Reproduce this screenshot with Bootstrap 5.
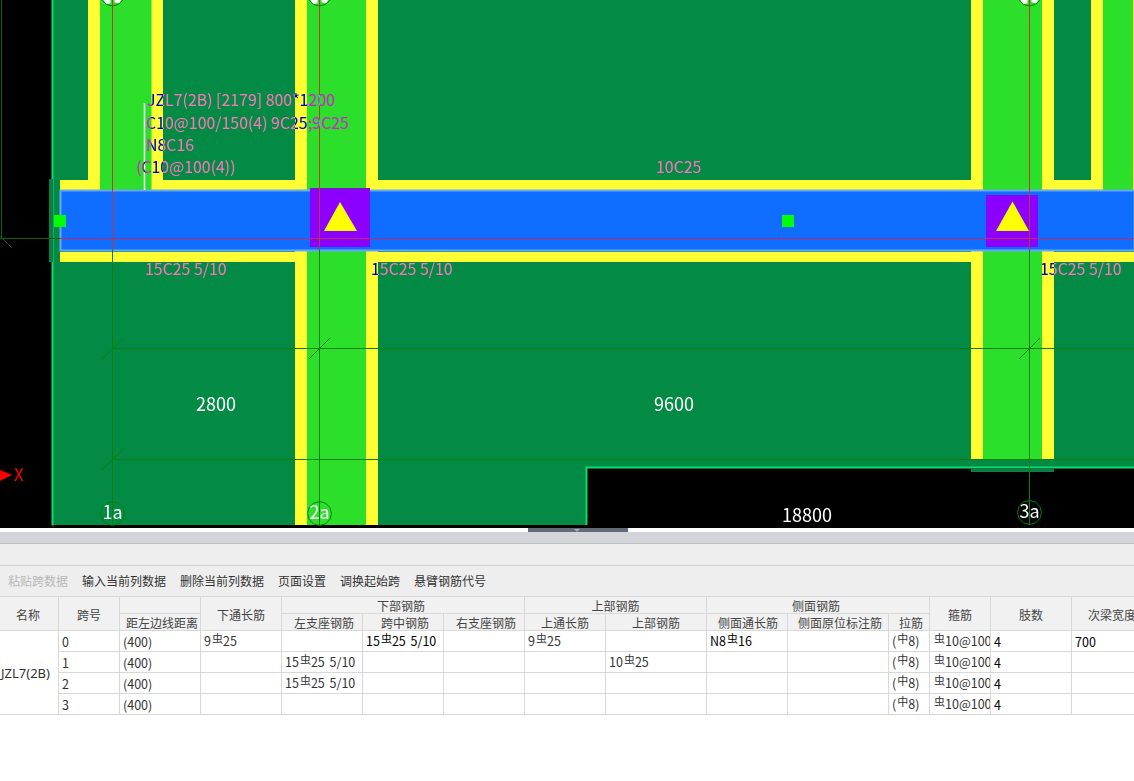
<!DOCTYPE html>
<html lang="zh"><head><meta charset="utf-8"><title>JZL7</title>
<link href="https://cdn.jsdelivr.net/npm/bootstrap@5.3.0/dist/css/bootstrap.min.css" rel="stylesheet">
<style>
html,body{height:100%;overflow:hidden}
body{background:#fff;font-family:"Noto Sans CJK SC","Noto Sans",sans-serif;font-size:12px;color:#333}
.cad-view{height:528px;background:#000;overflow:hidden;isolation:isolate}
.cad-svg{display:block;width:1134px;height:528px}
.cad-svg text{font-family:"Noto Sans CJK SC","Noto Sans",sans-serif}
.xor{fill:#fff;font-size:15.9px;mix-blend-mode:difference}
.dim{fill:#fff;font-size:18px}
.axis{fill:#fff;font-size:18px;text-anchor:middle}
.splitter{height:4px;background:#fff}
.grip{width:100px;height:4px;background:#636b78;margin-left:528px;position:relative}
.grip::after{content:"";position:absolute;left:46px;top:1px;border:3px solid transparent;border-top-color:#a9adb5;border-bottom:0}
.band-a{height:12px;background:#d3d5da;border-bottom:1px solid #bfc0c2}
.band-b{height:22px;background:#eee;border-bottom:1px solid #cfcfcf}
.tools{height:30px;background:#eee;padding-left:8px;gap:14px;color:#333}
.tools .tool{line-height:30px}
.tools .tool-off{color:#b8b8b8}
.sheet{overflow:hidden;width:1134px}
.sheet .grid-t{table-layout:fixed;width:1153px;border-collapse:separate;border-spacing:0;margin:0;border-top:1px solid #d8d8d8;font-size:12.5px;--bs-table-color:#333}
.grid-t th,.grid-t td{border:0;border-right:1px solid #d8d8d8;border-bottom:1px solid #d8d8d8;padding:0;white-space:nowrap;overflow:hidden}
.grid-t th{background:#f1f1f1;font-weight:400;font-size:12px;text-align:center;height:17px;line-height:14px;padding-top:2px;color:#444;vertical-align:middle;box-shadow:none}
.grid-t th.r2{padding-left:4px}
.grid-t th.r1{padding-left:2px}
.grid-t th.l2{padding-right:4px}
.grid-t th.l1{padding-right:2px}
.grid-t td{height:21px;line-height:16px;padding:2px 0 0 3px;vertical-align:middle;background:#fff;color:#333;box-shadow:none;word-spacing:2px}
.grid-t td.st{padding-top:0}
.grid-t td.nm{padding-left:1px;padding-top:0;font-family:"Noto Sans",sans-serif;font-size:13px}
.grid-t td.pk{color:#000}
.rb{font-size:11px;position:relative;top:-3px;margin:0 0 0 1px}
</style></head><body>
<div class="cad-view">
<svg class="cad-svg" viewBox="0 0 1134 528" xmlns="http://www.w3.org/2000/svg">
<defs><polygon id="bub" points="12,0 10.4,6 6,10.4 0,12 -6,10.4 -10.4,6 -12,0 -10.4,-6 -6,-10.4 0,-12 6,-10.4 10.4,-6" fill="none" stroke="#0a7f0a"/>
<path id="blob" d="M-9 0h7v3l-2 1h-3ZM2 0h7l-2 3h-3l-2-1Z" fill="#fff"/></defs>
<!-- slab -->
<path d="M53 0H1134V468H586V525H53Z" fill="#038a45"/>
<path d="M52.500 0V525.500M586.500 525V467.500H1134" fill="none" stroke="#0ddc72" stroke-width="2"/>
<rect x="49" y="179" width="4" height="83" fill="#0b7d45"/>
<rect x="971" y="468.500" width="83" height="3.500" fill="#0b7d45"/>
<path d="M1.500 0V238M0 236L12 248" fill="none" stroke="#0f5f0f"/>
<!-- columns -->
<g fill="#ffff33">
<rect x="88" y="0" width="75" height="190"/>
<rect x="295" y="0" width="83" height="525"/>
<rect x="971" y="0" width="83" height="459"/>
<rect x="1091" y="0" width="43" height="190"/>
<rect x="60" y="180" width="1074" height="10"/>
<rect x="60" y="252" width="1074" height="10"/>
</g>
<g fill="#2bdf2b">
<rect x="100" y="0" width="51.500" height="190"/>
<rect x="307" y="0" width="59" height="525"/>
<rect x="983" y="0" width="59" height="459"/>
<rect x="1103" y="0" width="30" height="190"/>
</g>
<!-- beam -->
<rect x="60.500" y="190.500" width="1074" height="60" fill="#0f6eff" stroke="#68a8f0" stroke-width="2"/>
<rect x="310" y="188" width="60" height="59" fill="#8b00ff"/>
<rect x="310" y="188" width="60" height="2" fill="#7a10d8"/>
<rect x="986" y="195" width="52" height="52" fill="#8b00ff"/>
<polygon points="340,202 324,231 357,231" fill="#ffff00"/>
<polygon points="1012.500,201.500 996,231 1029,231" fill="#ffff00"/>
<rect x="54" y="215" width="12" height="12" fill="#00ff00"/>
<rect x="782" y="215" width="12" height="12" fill="#00ff00"/>
<!-- bubbles top -->
<use href="#blob" x="112.500" y="0"/><use href="#blob" x="319.500" y="0"/><use href="#blob" x="1029.500" y="0"/>
<use href="#bub" x="112.500" y="-6"/><use href="#bub" x="319.500" y="-6"/><use href="#bub" x="1029.500" y="-6"/>
<!-- axes -->
<g fill="none" stroke="#0a7f0a">
<path d="M112.500 250V525M319.500 250V525M1029.500 250V501M1029.500 462V525"/>
<path d="M113 348.500H1134M113 459.500H1134"/>
<path d="M102 359L123 338M102 470L123 449M309 359L330 338M1019 359L1040 338"/>
<path d="M0 238.500H60" stroke="#0f5f0f"/>
</g>
<path d="M60 238.500H1134" fill="none" stroke="#c02a6a"/>
<path d="M112.500 0V250M319.500 0V250M1029.500 0V250" fill="none" stroke="#c0392b"/>
<path d="M144.500 103V190" fill="none" stroke="#fff" stroke-width="1.500"/>
<use href="#bub" x="112.500" y="513.500"/><use href="#bub" x="319.500" y="513.500"/><use href="#bub" x="1029.500" y="512.500"/>
<text class="axis" x="112.500" y="519">1a</text>
<text class="axis" x="319.500" y="519">2a</text>
<text class="axis" x="1029.500" y="518">3a</text>
<!-- origin -->
<polygon points="0,470 12,475 0,481" fill="#ff0000"/>
<text x="14" y="481" fill="#ff0000" font-size="17">X</text>
<!-- dims -->
<text class="dim" x="196" y="411">2800</text>
<text class="dim" x="654" y="411">9600</text>
<text class="dim" x="782" y="522">18800</text>
<!-- annotations -->
<text class="xor" x="147" y="106">JZL7(2B) [2179] 800*1200</text>
<text class="xor" x="146" y="128.500">C10@100/150(4) 9C25;9C25</text>
<text class="xor" x="146" y="150.500">N8C16</text>
<text class="xor" x="136" y="172.500">(C10@100(4))</text>
<text class="xor" x="656" y="173">10C25</text>
<text class="xor" x="145" y="274.500">15C25 5/10</text>
<text class="xor" x="371" y="274.500">15C25 5/10</text>
<text class="xor" x="1040" y="274.500">15C25 5/10</text>
</svg>
</div>
<div class="splitter"><div class="grip"></div></div>
<div class="band-a"></div>
<div class="band-b"></div>
<div class="tools d-flex">
<span class="tool tool-off">粘贴跨数据</span><span class="tool">输入当前列数据</span><span class="tool">删除当前列数据</span><span class="tool">页面设置</span><span class="tool">调换起始跨</span><span class="tool">悬臂钢筋代号</span>
</div>
<div class="sheet">
<table class="table grid-t">
<colgroup><col style="width:59px"><col style="width:61px"><col style="width:81px"><col style="width:81px"><col style="width:81px"><col style="width:81px"><col style="width:81px"><col style="width:81px"><col style="width:101px"><col style="width:81px"><col style="width:101px"><col style="width:41px"><col style="width:61px"><col style="width:81px"><col style="width:81px"></colgroup>
<thead>
<tr><th rowspan="2" class="l1">名称</th><th rowspan="2">跨号</th><th></th><th rowspan="2">下通长筋</th><th colspan="3" class="l2">下部钢筋</th><th colspan="2">上部钢筋</th><th colspan="3" class="l2">侧面钢筋</th><th rowspan="2">箍筋</th><th rowspan="2">肢数</th><th rowspan="2">次梁宽度</th></tr>
<tr><th class="r2">距左边线距离</th><th class="r2">左支座钢筋</th><th class="r2">跨中钢筋</th><th class="r2">右支座钢筋</th><th>上通长筋</th><th>上部钢筋</th><th class="r1">侧面通长筋</th><th class="r2">侧面原位标注筋</th><th class="r2">拉筋</th></tr>
</thead>
<tbody>
<tr><td class="nm" rowspan="4">JZL7(2B)</td><td>0</td><td>(400)</td><td class="st">9<span class="rb">虫</span>25</td><td></td><td class="st pk">15<span class="rb">虫</span>25 5/10</td><td></td><td class="st">9<span class="rb">虫</span>25</td><td></td><td class="st pk">N8<span class="rb">虫</span>16</td><td></td><td class="st">(<span class="rb">中</span>8)</td><td class="st"><span class="rb">虫</span>10@100</td><td class="pk">4</td><td class="pk">700</td></tr>
<tr><td>1</td><td>(400)</td><td></td><td class="st">15<span class="rb">虫</span>25 5/10</td><td></td><td></td><td></td><td class="st">10<span class="rb">虫</span>25</td><td></td><td></td><td class="st">(<span class="rb">中</span>8)</td><td class="st"><span class="rb">虫</span>10@100</td><td class="pk">4</td><td></td></tr>
<tr><td>2</td><td>(400)</td><td></td><td class="st">15<span class="rb">虫</span>25 5/10</td><td></td><td></td><td></td><td></td><td></td><td></td><td class="st">(<span class="rb">中</span>8)</td><td class="st"><span class="rb">虫</span>10@100</td><td class="pk">4</td><td></td></tr>
<tr><td>3</td><td>(400)</td><td></td><td></td><td></td><td></td><td></td><td></td><td></td><td></td><td class="st">(<span class="rb">中</span>8)</td><td class="st"><span class="rb">虫</span>10@100</td><td class="pk">4</td><td></td></tr>
</tbody></table>
</div>
<script src="https://cdn.jsdelivr.net/npm/bootstrap@5.3.0/dist/js/bootstrap.bundle.min.js"></script>
</body></html>
